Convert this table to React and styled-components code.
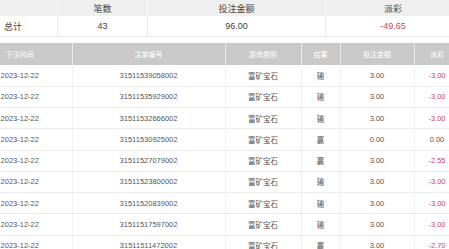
import React from 'react'
import styled, { createGlobalStyle } from 'styled-components'

const GlobalStyle = createGlobalStyle`
    html, body {
        margin: 0;
        padding: 0;
        background: #fff;
    }
    body {
        font-family: "Liberation Sans", "Noto Sans CJK SC", sans-serif;
        color: #555;
    }
`

const Viewport = styled.div`
    width: 449px;
    height: 249px;
    overflow: hidden;
`

// table is scrolled sideways a little, so it starts left of the view
const Scroller = styled.div`
    width: 492px;
    margin-left: -32px;
`

const Table = styled.table`
    width: 492px;
    border-collapse: collapse;
    table-layout: fixed;
    margin-bottom: ${p => p.gap || 0}px;
`

const SumHead = styled.th`
    height: 16px;
    padding: 0;
    background: #efefef;
    color: #444;
    font-size: 9px;
    font-weight: normal;
    text-align: center;
    border-right: 1px solid #f9f9f9;
`

const SumCell = styled.td`
    height: 20px;
    padding: 0;
    font-size: 9px;
    color: ${p => (p.$red ? '#c9485c' : '#444')};
    text-align: center;
    border: 1px solid #ebebeb;
    border-top: none;
`

const Head = styled.th`
    height: 22px;
    padding: 0;
    background: #c9c9c9;
    color: #fff;
    font-size: 7px;
    font-weight: normal;
    text-align: center;
    border-right: 1px solid #e9e9e9;
`

const Row = styled.tr`
    height: 21.25px;
`

const Cell = styled.td`
    padding: 0;
    font-size: 7.5px;
    color: ${p => (p.$red ? '#c9485c' : '#555')};
    text-align: center;
    border-right: 1px solid #f0f0f0;
    border-bottom: 1px solid #ebebeb;
`

const records = [
    ['31511539058002', '输', '3.00', '-3.00'],
    ['31511535929002', '输', '3.00', '-3.00'],
    ['31511532666002', '输', '3.00', '-3.00'],
    ['31511530925002', '赢', '0.00', '0.00'],
    ['31511527079002', '赢', '3.00', '-2.55'],
    ['31511523800002', '输', '3.00', '-3.00'],
    ['31511520839002', '输', '3.00', '-3.00'],
    ['31511517597002', '输', '3.00', '-3.00'],
    ['31511511472002', '赢', '3.00', '-2.70'],
]

const App = () => (
    <Viewport>
        <GlobalStyle />
        <Scroller>
            <Table gap={6}>
                <colgroup>
                    <col style={{ width: 89 }} />
                    <col style={{ width: 90 }} />
                    <col style={{ width: 178 }} />
                    <col style={{ width: 135 }} />
                </colgroup>
                <thead>
                    <tr>
                        <SumHead></SumHead>
                        <SumHead>笔数</SumHead>
                        <SumHead>投注金额</SumHead>
                        <SumHead>派彩</SumHead>
                    </tr>
                </thead>
                <tbody>
                    <tr>
                        <SumCell>总计</SumCell>
                        <SumCell>43</SumCell>
                        <SumCell>96.00</SumCell>
                        <SumCell $red>-49.65</SumCell>
                    </tr>
                </tbody>
            </Table>

            <Table>
                <colgroup>
                    <col style={{ width: 104 }} />
                    <col style={{ width: 153 }} />
                    <col style={{ width: 76 }} />
                    <col style={{ width: 39 }} />
                    <col style={{ width: 74 }} />
                    <col style={{ width: 46 }} />
                </colgroup>
                <thead>
                    <tr>
                        <Head>下注时间</Head>
                        <Head>注单编号</Head>
                        <Head>游戏类别</Head>
                        <Head>结果</Head>
                        <Head>投注金额</Head>
                        <Head>派彩</Head>
                    </tr>
                </thead>
                <tbody>
                    {records.map(r => (
                        <Row key={r[0]}>
                            <Cell>2023-12-22</Cell>
                            <Cell>{r[0]}</Cell>
                            <Cell>富矿宝石</Cell>
                            <Cell>{r[1]}</Cell>
                            <Cell>{r[2]}</Cell>
                            <Cell $red={r[3].startsWith('-')}>{r[3]}</Cell>
                        </Row>
                    ))}
                </tbody>
            </Table>
        </Scroller>
    </Viewport>
)

export default App
